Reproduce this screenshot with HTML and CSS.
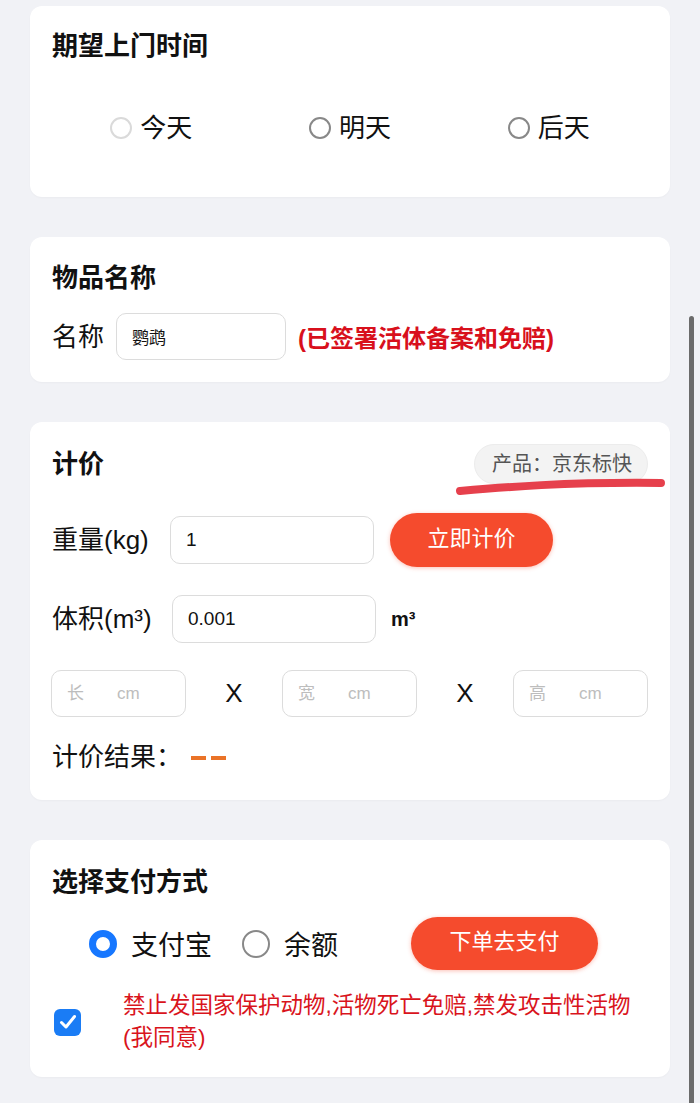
FILE: index.html
```html
<!DOCTYPE html>
<html lang="zh-CN">
<head>
    <meta charset="UTF-8">
    <meta name="viewport" content="width=device-width, initial-scale=1.0">
    <title>寄件下单</title>
    <link rel="stylesheet" href="styles.css">
</head>
<body>
    <div class="page">
        <!-- 上门时间 -->
        <div class="card card-time">
            <div class="card-title">期望上门时间</div>
            <div class="time-options">
                <label class="option"><span class="radio radio-light"></span>今天</label>
                <label class="option"><span class="radio"></span>明天</label>
                <label class="option"><span class="radio"></span>后天</label>
            </div>
        </div>

        <!-- 物品名称 -->
        <div class="card card-goods">
            <div class="card-title">物品名称</div>
            <div class="goods-row">
                <span class="field-label">名称</span>
                <input class="text-input name-input" type="text" value="鹦鹉">
                <span class="goods-note">(已签署活体备案和免赔)</span>
            </div>
        </div>

        <!-- 计价 -->
        <div class="card card-price">
            <div class="price-header">
                <div class="card-title">计价</div>
                <div class="product-pill">产品：京东标快</div>
                <svg class="pill-mark" width="214" height="22" viewBox="0 0 214 22">
                    <path d="M5 15 C 50 11, 110 6, 206 7" fill="none" stroke="#e6404c" stroke-width="8" stroke-linecap="round"/>
                </svg>
            </div>
            <div class="form-row row-weight">
                <span class="field-label">重量(kg)</span>
                <input class="text-input" type="text" value="1">
                <button class="btn-primary btn-calc">立即计价</button>
            </div>
            <div class="form-row row-volume">
                <span class="field-label">体积(m³)</span>
                <input class="text-input" type="text" value="0.001">
                <span class="unit">m³</span>
            </div>
            <div class="dims-row">
                <input class="dim-input" type="text" placeholder="长&nbsp;&nbsp;&nbsp;&nbsp;&nbsp;&nbsp;&nbsp;cm">
                <span class="dim-x">X</span>
                <input class="dim-input" type="text" placeholder="宽&nbsp;&nbsp;&nbsp;&nbsp;&nbsp;&nbsp;&nbsp;cm">
                <span class="dim-x">X</span>
                <input class="dim-input" type="text" placeholder="高&nbsp;&nbsp;&nbsp;&nbsp;&nbsp;&nbsp;&nbsp;cm">
            </div>
            <div class="price-result">
                <span>计价结果：</span><span class="result-value"><i></i><i></i></span>
            </div>
        </div>

        <!-- 支付方式 -->
        <div class="card card-pay">
            <div class="card-title">选择支付方式</div>
            <div class="pay-row">
                <label class="pay-option"><span class="radio radio-big radio-checked"></span>支付宝</label>
                <label class="pay-option"><span class="radio radio-big"></span>余额</label>
                <button class="btn-primary btn-pay">下单去支付</button>
            </div>
            <div class="agree-row">
                <span class="checkbox">
                    <svg width="18" height="16" viewBox="0 0 18 16">
                        <path d="M2.5 8.5 L7 13 L15.5 2.5" fill="none" stroke="#fff" stroke-width="3" stroke-linecap="round" stroke-linejoin="round"/>
                    </svg>
                </span>
                <span class="agree-text">禁止发国家保护动物,活物死亡免赔,禁发攻击性活物(我同意)</span>
            </div>
        </div>
    </div>
    <div class="scroll-indicator"></div>
</body>
</html>
```
FILE: styles.css
```css
body {
    margin: 0;
    font-family: 'Liberation Sans', 'Noto Sans CJK SC', sans-serif;
    color: #111;
    background-color: #f1f2f6;
}
.page {
    padding: 6px 30px 30px;
}
.card {
    background-color: white;
    border-radius: 12px;
    padding: 22px 22px;
    margin-bottom: 40px;
    box-shadow: 0 1px 2px rgba(0, 0, 0, 0.03);
}
.card-title {
    font-size: 26px;
    font-weight: bold;
    line-height: 36px;
}
.card-time {
    padding-bottom: 51px;
}
.time-options {
    display: grid;
    grid-template-columns: 1fr 1fr 1fr;
    justify-items: center;
    margin-top: 46px;
}
.option {
    display: flex;
    align-items: center;
    font-size: 26px;
    line-height: 36px;
}
.radio {
    width: 22px;
    height: 22px;
    border: 2px solid #888;
    border-radius: 50%;
    box-sizing: border-box;
    margin-right: 8px;
    flex-shrink: 0;
}
.radio-light {
    border-color: #dadada;
}
.radio-big {
    width: 28px;
    height: 28px;
    border-width: 2.5px;
    margin-right: 14px;
}
.radio-checked {
    border: 7.5px solid #1677ff;
}

.card-goods {
    padding-top: 23px;
}
.goods-row {
    display: flex;
    align-items: center;
    margin-top: 17px;
}
.field-label {
    font-size: 26px;
    line-height: 36px;
    margin-right: 12px;
}
.text-input {
    width: 204px;
    height: 48px;
    box-sizing: border-box;
    border: 1.5px solid #dcdcdc;
    border-radius: 10px;
    padding: 0 15px;
    font-family: inherit;
    font-size: 19px;
    color: #111;
    outline: none;
}
.name-input {
    width: 170px;
    height: 47px;
    font-size: 17px;
}
.goods-note {
    color: #d8101c;
    font-size: 24px;
    font-weight: bold;
    margin-left: 12px;
}

.card-price {
    padding-bottom: 25px;
}
.price-header {
    position: relative;
    display: flex;
    align-items: center;
    justify-content: space-between;
    height: 40px;
}
.product-pill {
    height: 40px;
    box-sizing: border-box;
    padding: 0 15px 0 17px;
    border: 1px solid #ececec;
    border-radius: 20px;
    background-color: #f3f3f3;
    color: #555;
    font-size: 20px;
    line-height: 38px;
}
.pill-mark {
    position: absolute;
    left: 403px;
    top: 32px;
}
.form-row {
    display: flex;
    align-items: center;
}
.form-row .field-label {
    width: 118px;
    margin-right: 0;
}
.row-weight {
    height: 54px;
    margin-top: 29px;
}
.row-volume {
    height: 48px;
    margin-top: 28px;
}
.row-volume .text-input {
    margin-left: 2px;
}
.btn-primary {
    background-color: #f54b2d;
    color: white;
    border: none;
    border-radius: 27px;
    font-family: inherit;
    font-size: 22px;
    line-height: 1;
    padding: 0 0 3px;
    cursor: pointer;
    box-shadow: 0 1px 4px rgba(245, 75, 45, 0.35);
}
.btn-calc {
    width: 163px;
    height: 54px;
    margin-left: 16px;
}
.unit {
    font-size: 20px;
    font-weight: bold;
    margin-left: 15px;
}
.dims-row {
    display: grid;
    grid-template-columns: 135px 1fr 135px 1fr 135px;
    align-items: center;
    margin-top: 27px;
    margin-left: -1px;
}
.dim-input {
    width: 135px;
    height: 47px;
    box-sizing: border-box;
    border: 1.5px solid #dcdcdc;
    border-radius: 10px;
    padding: 0 15px;
    font-family: inherit;
    font-size: 17px;
    outline: none;
}
.dim-input::placeholder {
    color: #bdbdbd;
}
.dim-x {
    text-align: center;
    font-size: 26px;
}
.price-result {
    display: flex;
    align-items: center;
    font-size: 26px;
    line-height: 36px;
    margin-top: 22px;
}
.result-value {
    display: flex;
    gap: 5px;
    margin-left: 9px;
    padding-top: 2px;
}
.result-value i {
    display: block;
    width: 15px;
    height: 3.5px;
    background-color: #ea7328;
}

.card-pay {
    padding-top: 24px;
    padding-bottom: 23px;
}
.pay-row {
    display: flex;
    align-items: center;
    margin-top: 17px;
    padding-left: 37px;
}
.pay-option {
    display: flex;
    align-items: center;
    font-size: 27px;
    margin-right: 30px;
}
.btn-pay {
    width: 187px;
    height: 53px;
    margin-left: 43px;
}
.agree-row {
    display: flex;
    align-items: center;
    margin-top: 20px;
}
.checkbox {
    width: 27px;
    height: 27px;
    border-radius: 6px;
    background-color: #1a7cf5;
    margin-left: 2px;
    display: flex;
    align-items: center;
    justify-content: center;
    flex-shrink: 0;
}
.agree-text {
    margin-left: 42px;
    color: #d9141c;
    font-size: 22.5px;
    line-height: 32px;
}

.scroll-indicator {
    position: fixed;
    right: 6px;
    top: 316px;
    bottom: 0;
    width: 5px;
    border-radius: 3px 3px 0 0;
    background-color: #6b6b6b;
}
```
